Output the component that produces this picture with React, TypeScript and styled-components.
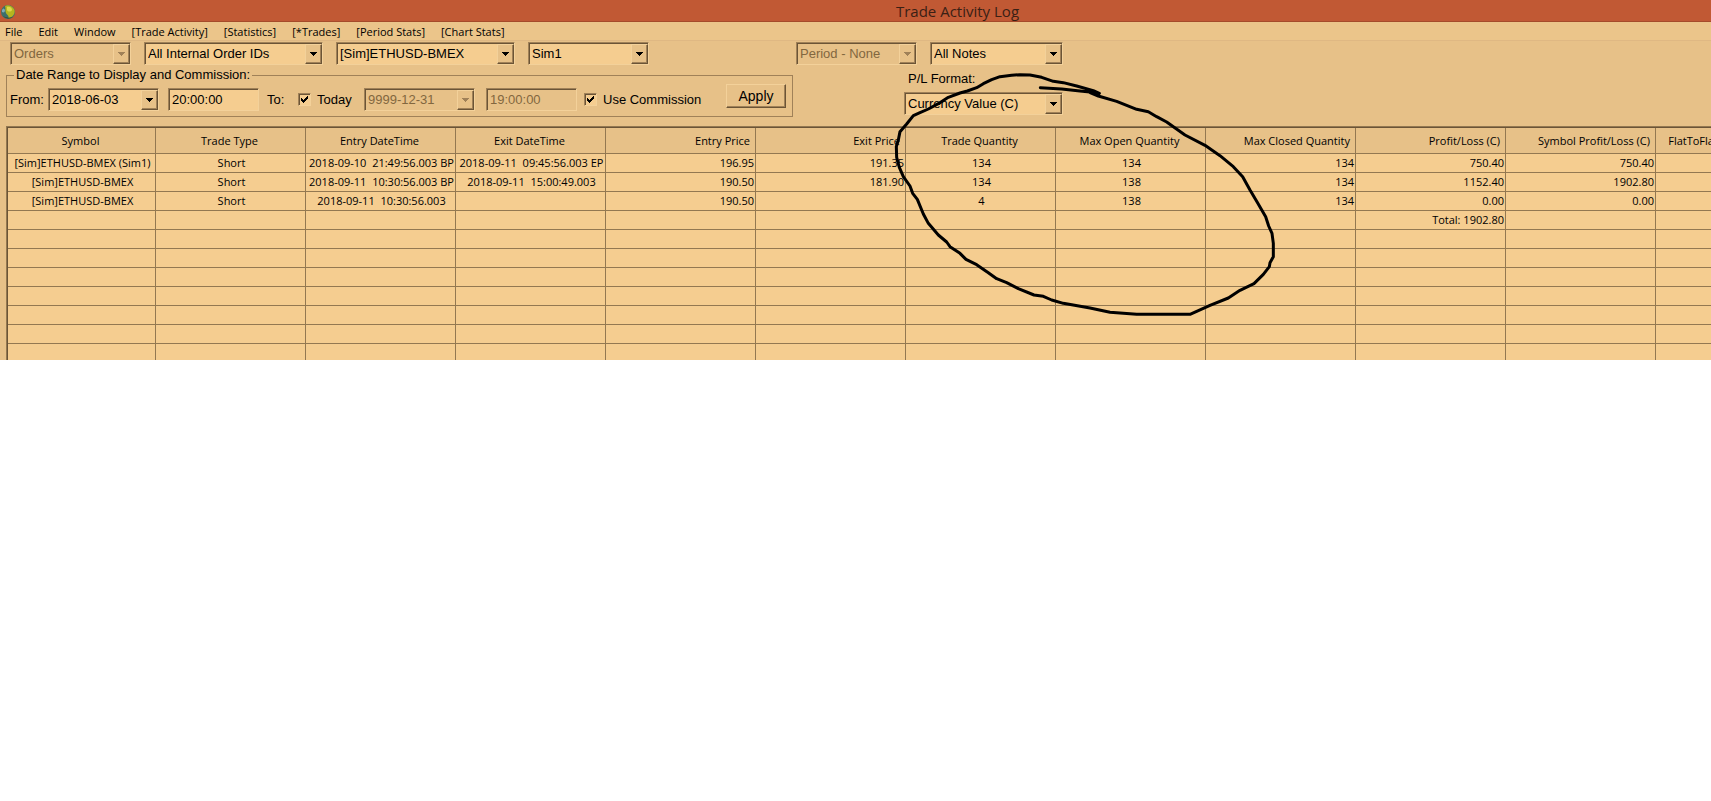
import React from "react";
import styled, { createGlobalStyle, css } from "styled-components";

const color = {
  title: "#c15934",
  titleEdge: "#a54b2a",
  titleText: "#3a2014",
  menu: "#ebc58a",
  menuEdge: "#dfb883",
  face: "#e7c188",
  field: "#f5cd90",
  line: "#937851",
  dark: "#6b5436",
  mid: "#a08158",
  light: "#f3d19a",
  text: "#000",
  disabled: "#82673f",
};

const uiFont = `"Open Sans", "Noto Sans", sans-serif`;
const controlFont = `"Liberation Sans", Arial, sans-serif`;

const GlobalStyle = createGlobalStyle`
  *, *::before, *::after { box-sizing: border-box; }
  html { background: #fff; }
  body { margin: 0; overflow-x: hidden; color: ${color.text}; }
`;

const Window = styled.main`
  position: relative;
  background: ${color.face};
  overflow: hidden;
`;

const TitleBar = styled.header`
  display: flex;
  align-items: center;
  height: 22px;
  background: ${color.title};
  border-bottom: 1px solid ${color.titleEdge};
`;

const Title = styled.h1`
  flex: 1;
  margin: 0;
  padding-left: 188px;
  text-align: center;
  font: 400 15px/20px ${uiFont};
  color: ${color.titleText};
`;

const AppIcon = styled.svg`
  width: 16px;
  height: 16px;
  flex: none;
`;

const MenuBar = styled.nav`
  display: flex;
  gap: 16px;
  height: 19px;
  padding-left: 5px;
  background: ${color.menu};
  border-bottom: 1px solid ${color.menuEdge};
`;

const MenuItem = styled.button`
  padding: 0;
  border: 0;
  background: none;
  color: inherit;
  font: 400 11px/19px ${uiFont};
  white-space: nowrap;
`;

const Toolbar = styled.section`
  display: flex;
  padding: 1px 6px 0;
  height: 85px;
`;

const FilterPane = styled.div`
  width: 787px;
  flex: none;
`;

const FormatPane = styled.div`
  padding-left: 3px;
  flex: none;
`;

const ComboRow = styled.div<{ $inset?: number }>`
  display: flex;
  gap: 13px;
  padding-left: ${(p) => p.$inset ?? 0}px;
`;

const sunken = css`
  border: 1px solid ${color.light};
  border-top-color: ${color.mid};
  border-left-color: ${color.mid};
  box-shadow: inset 1px 1px 0 ${color.dark};
`;

const raised = css`
  border: 1px solid ${color.dark};
  border-top-color: ${color.light};
  border-left-color: ${color.light};
  box-shadow: inset -1px -1px 0 ${color.mid};
`;

const ComboFrame = styled.span<{ $width: number }>`
  position: relative;
  display: block;
  flex: none;
  width: ${(p) => p.$width}px;
  height: 23px;
`;

const ComboSelect = styled.select`
  ${sunken}
  appearance: none;
  width: 100%;
  height: 100%;
  margin: 0;
  padding: 0 20px 0 3px;
  border-radius: 0;
  background: ${color.field};
  color: ${color.text};
  font: 400 13px/20px ${controlFont};
  &:disabled {
    background: ${color.face};
    color: ${color.disabled};
    opacity: 1;
  }
`;

const ComboArrow = styled.span`
  ${raised}
  position: absolute;
  top: 2px;
  right: 1px;
  bottom: 1px;
  width: 17px;
  display: grid;
  place-items: center;
  background: ${color.face};
  pointer-events: none;
`;

const TimeInput = styled.input`
  ${sunken}
  width: 91px;
  height: 23px;
  padding: 0 3px;
  margin: 0;
  border-radius: 0;
  background: ${color.field};
  color: ${color.text};
  font: 400 13px/20px ${controlFont};
  &:disabled {
    background: ${color.face};
    color: ${color.disabled};
  }
`;

const RangeBox = styled.fieldset`
  display: flex;
  margin: 2px 0 0;
  padding: 5px 6px 6px 3px;
  min-width: 0;
  height: 50px;
  border: 1px solid ${color.mid};
`;

const RangeLegend = styled.legend`
  margin-left: 4px;
  padding: 0 2px;
  font: 400 13px/16px ${controlFont};
`;

const RangeRow = styled.div`
  display: flex;
  align-items: center;
  width: 100%;
  height: 23px;
`;

const Caption = styled.label<{ $width?: number }>`
  flex: none;
  width: ${(p) => (p.$width ? `${p.$width}px` : "auto")};
  font: 400 13px/16px ${controlFont};
  white-space: nowrap;
`;

const Gap = styled.span<{ $size: number }>`
  flex: none;
  width: ${(p) => p.$size}px;
`;

const TickFrame = styled.span`
  position: relative;
  flex: none;
  width: 13px;
  height: 13px;
  margin-right: 6px;
  svg {
    position: absolute;
    inset: 3px;
    pointer-events: none;
  }
`;

const TickInput = styled.input`
  ${sunken}
  appearance: none;
  display: block;
  width: 13px;
  height: 13px;
  margin: 0;
  background: ${color.field};
`;

const ApplyButton = styled.button`
  ${raised}
  align-self: flex-start;
  width: 60px;
  height: 24px;
  margin: -4px 0 0 auto;
  padding: 0;
  background: ${color.face};
  color: ${color.text};
  font: 400 14px/20px ${controlFont};
`;

const FormatBlock = styled.div`
  display: flex;
  flex-direction: column;
  gap: 5px;
  margin-top: 6px;
  padding-left: 108px;
  ${Caption} {
    padding-left: 4px;
  }
`;

const GridFrame = styled.div`
  height: 234px;
  margin-left: 6px;
  overflow: hidden;
  background: ${color.field};
  border-top: 1px solid ${color.line};
  border-left: 1px solid ${color.line};
  box-shadow: inset 1px 1px 0 ${color.dark};
  padding: 1px 0 0 1px;
`;

const TradeTable = styled.table`
  table-layout: fixed;
  width: 1790px;
  border-collapse: separate;
  border-spacing: 0;
  font: 400 11px/16px ${uiFont};
`;

type Align = "center" | "right";

const HeadCell = styled.th<{ $align: Align }>`
  height: 26px;
  padding: 0 ${(p) => (p.$align === "right" ? 5 : 2)}px 0 0;
  text-align: ${(p) => p.$align};
  font-weight: 400;
  white-space: nowrap;
  background: ${color.face};
  border-right: 1px solid ${color.line};
  border-bottom: 1px solid ${color.line};
`;

const Cell = styled.td<{ $align: Align }>`
  height: 19px;
  padding: 0 ${(p) => (p.$align === "right" ? 1 : 0)}px 0 ${(p) => (p.$align === "right" ? 0 : 2)}px;
  text-align: ${(p) => p.$align};
  white-space: pre;
  border-right: 1px solid ${color.line};
  border-bottom: 1px solid ${color.line};
`;

const PenMark = styled.svg`
  position: absolute;
  left: 860px;
  top: 60px;
  width: 430px;
  height: 270px;
  pointer-events: none;
`;

function Combo(props: { label: string; value: string; width: number; disabled?: boolean; id?: string }) {
  return (
    <ComboFrame $width={props.width}>
      <ComboSelect id={props.id} aria-label={props.label} disabled={props.disabled} defaultValue={props.value}>
        <option>{props.value}</option>
      </ComboSelect>
      <ComboArrow>
        <svg width="7" height="4" viewBox="0 0 7 4" shapeRendering="crispEdges" aria-hidden="true">
          <path d="M0 0H7V1H6V2H5V3H4V4H3V3H2V2H1V1H0Z" fill={props.disabled ? color.mid : "#000"} />
        </svg>
      </ComboArrow>
    </ComboFrame>
  );
}

function Tick(props: { id: string }) {
  return (
    <TickFrame>
      <TickInput id={props.id} type="checkbox" defaultChecked />
      <svg width="7" height="7" viewBox="0 0 7 7" shapeRendering="crispEdges" aria-hidden="true">
        <path d="M0 2H1V3H2V4H3V3H4V2H5V1H6V0H7V3H6V4H5V5H4V6H3V7H2V6H1V5H0Z" fill="#000" />
      </svg>
    </TickFrame>
  );
}

const menus = ["File", "Edit", "Window", "[Trade Activity]", "[Statistics]", "[*Trades]", "[Period Stats]", "[Chart Stats]"];

const columns: { name: string; align: Align; width: number }[] = [
  { name: "Symbol", align: "center", width: 148 },
  { name: "Trade Type", align: "center", width: 150 },
  { name: "Entry DateTime", align: "center", width: 150 },
  { name: "Exit DateTime", align: "center", width: 150 },
  { name: "Entry Price", align: "right", width: 150 },
  { name: "Exit Price", align: "right", width: 150 },
  { name: "Trade Quantity", align: "center", width: 150 },
  { name: "Max Open Quantity", align: "center", width: 150 },
  { name: "Max Closed Quantity", align: "right", width: 150 },
  { name: "Profit/Loss (C)", align: "right", width: 150 },
  { name: "Symbol Profit/Loss (C)", align: "right", width: 150 },
  { name: "FlatToFlat Profit/Loss (C)", align: "right", width: 142 },
];

const trades: string[][] = [
  ["[Sim]ETHUSD-BMEX (Sim1)", "Short", "2018-09-10  21:49:56.003 BP", "2018-09-11  09:45:56.003 EP", "196.95", "191.35", "134", "134", "134", "750.40", "750.40"],
  ["[Sim]ETHUSD-BMEX", "Short", "2018-09-11  10:30:56.003 BP", "2018-09-11  15:00:49.003", "190.50", "181.90", "134", "138", "134", "1152.40", "1902.80"],
  ["[Sim]ETHUSD-BMEX", "Short", "2018-09-11  10:30:56.003", "", "190.50", "", "4", "138", "134", "0.00", "0.00"],
  ["", "", "", "", "", "", "", "", "", "Total: 1902.80", ""],
  [], [], [], [], [], [], [],
];

export default function App() {
  return (
    <>
      <GlobalStyle />
      <Window>
        <TitleBar>
          <AppIcon viewBox="0 0 16 16" aria-hidden="true">
            <circle cx="8" cy="10" r="7" fill="#3d6f6a" transform="translate(0 -1)" />
            <path d="M5 3C8 1 13 3 14.500 7C15.500 11 12 15 8.500 15C9 12 7 12 6 10C5 8 6 6 5 3Z" fill="#b5b51f" />
            <path d="M7 4C10 3 12 5 12 7C11 9 8 9 7 7Z" fill="#dcd84a" />
            <path d="M2 7C3 5 4 5 5 7C5 9 4 10 2 9Z" fill="#7fa9b8" />
            <path d="M3 13C5 16 11 16 13 14C10 15 6 15 3 13Z" fill="#31492a" />
          </AppIcon>
          <Title>Trade Activity Log</Title>
        </TitleBar>

        <MenuBar aria-label="Main menu">
          {menus.map((m) => (
            <MenuItem key={m} type="button">{m}</MenuItem>
          ))}
        </MenuBar>

        <Toolbar>
          <FilterPane>
            <ComboRow $inset={4}>
              <Combo label="View" value="Orders" width={121} disabled />
              <Combo label="Internal order ID" value="All Internal Order IDs" width={179} />
              <Combo label="Symbol" value="[Sim]ETHUSD-BMEX" width={179} />
              <Combo label="Account" value="Sim1" width={121} />
            </ComboRow>
            <RangeBox>
              <RangeLegend>Date Range to Display and Commission:</RangeLegend>
              <RangeRow>
                <Caption htmlFor="from-date" $width={38}>From:</Caption>
                <Combo id="from-date" label="From date" value="2018-06-03" width={111} />
                <Gap $size={9} />
                <TimeInput aria-label="From time" defaultValue="20:00:00" />
                <Gap $size={8} />
                <Caption htmlFor="to-date" $width={31}>To:</Caption>
                <Tick id="today" />
                <Caption htmlFor="today" $width={47}>Today</Caption>
                <Combo id="to-date" label="To date" value="9999-12-31" width={111} disabled />
                <Gap $size={11} />
                <TimeInput aria-label="To time" defaultValue="19:00:00" disabled />
                <Gap $size={7} />
                <Tick id="commission" />
                <Caption htmlFor="commission">Use Commission</Caption>
                <ApplyButton type="button">Apply</ApplyButton>
              </RangeRow>
            </RangeBox>
          </FilterPane>
          <FormatPane>
            <ComboRow>
              <Combo label="Period" value="Period - None" width={121} disabled />
              <Combo label="Notes" value="All Notes" width={133} />
            </ComboRow>
            <FormatBlock>
              <Caption htmlFor="pl-format">P/L Format:</Caption>
              <Combo id="pl-format" label="P/L Format" value="Currency Value (C)" width={159} />
            </FormatBlock>
          </FormatPane>
        </Toolbar>

        <GridFrame>
          <TradeTable>
            <colgroup>
              {columns.map((c) => (
                <col key={c.name} width={c.width} />
              ))}
            </colgroup>
            <thead>
              <tr>
                {columns.map((c) => (
                  <HeadCell key={c.name} $align={c.align} scope="col">{c.name}</HeadCell>
                ))}
              </tr>
            </thead>
            <tbody>
              {trades.map((row, r) => (
                <tr key={r}>
                  {columns.map((c, i) => (
                    <Cell key={c.name} $align={c.align}>{row[i] ?? ""}</Cell>
                  ))}
                </tr>
              ))}
            </tbody>
          </TradeTable>
        </GridFrame>

        <PenMark viewBox="0 0 1290 810" aria-hidden="true">
          <polyline
            fill="none"
            stroke="#000"
            strokeWidth="9"
            strokeLinecap="round"
            strokeLinejoin="round"
            points="541,83 605,87 660,93 690,96 712,105 718,100 700,92 650,78 610,68 580,64 545,52 510,45 480,44 455,46 420,50 395,59 370,71 350,83 322,93 300,99 265,112 235,131 205,147 180,158 160,167 140,192 120,215 115,240 109,260 110,292 118,322 130,350 150,378 158,400 172,418 190,462 205,490 235,525 260,546 270,560 300,580 318,598 350,614 385,638 410,656 440,668 475,686 522,705 550,709 575,720 610,730 690,744 750,757 830,763 990,763 1050,736 1105,714 1140,691 1182,671 1210,643 1228,620 1230,608 1240,590 1240,550 1236,520 1226,498 1217,470 1190,424 1170,390 1148,350 1120,320 1080,287 1035,256 975,225 920,186 890,170 865,155 830,148 770,124 715,108 690,98"
          />
        </PenMark>
      </Window>
    </>
  );
}
